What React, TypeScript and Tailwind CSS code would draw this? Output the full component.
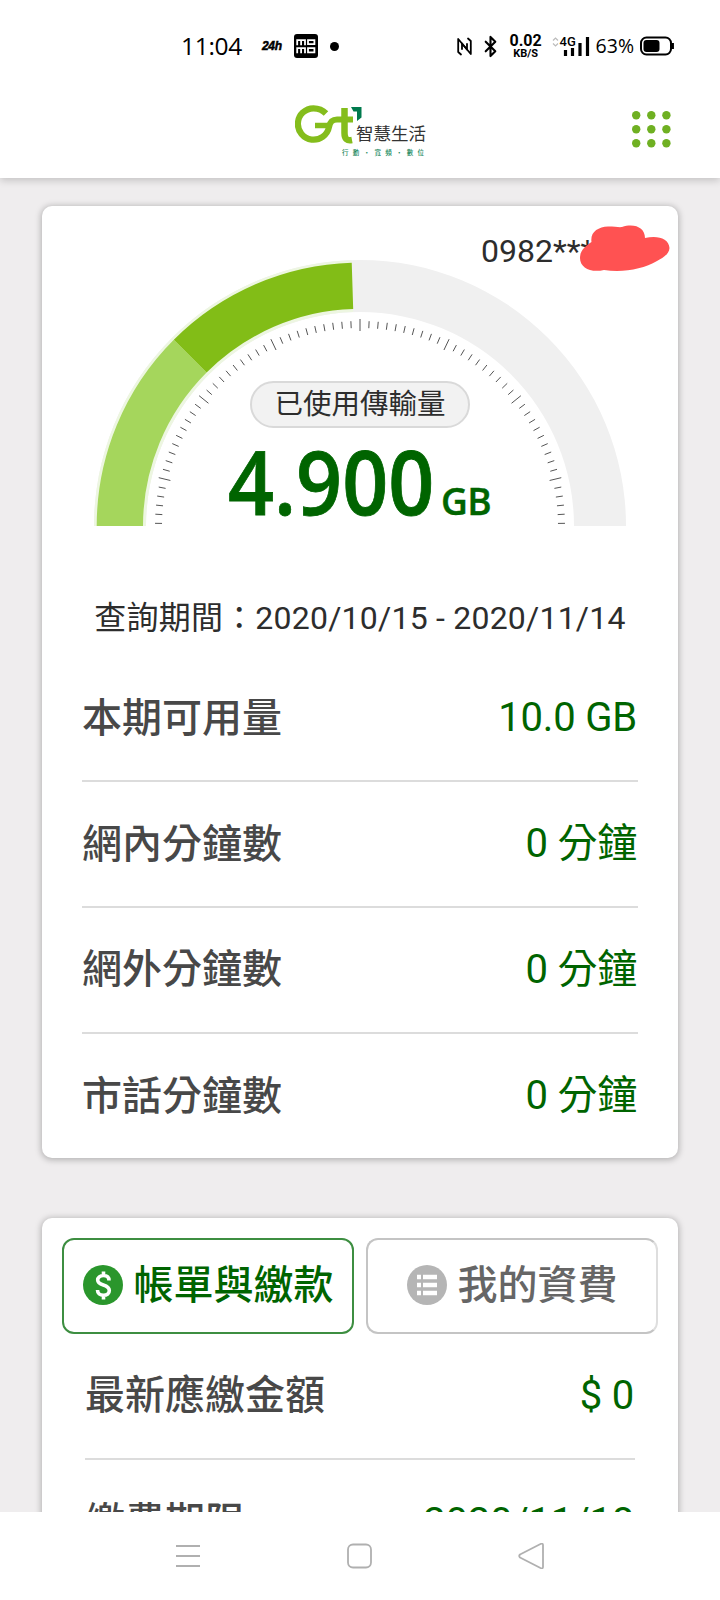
import React from 'react';
import { Bluetooth } from 'lucide-react';

interface UsageRow {
  label: string;
  value: string;
}

const usageRows: UsageRow[] = [
  { label: '本期可用量', value: '10.0 GB' },
  { label: '網內分鐘數', value: '0 分鐘' },
  { label: '網外分鐘數', value: '0 分鐘' },
  { label: '市話分鐘數', value: '0 分鐘' },
];

// Point on the gauge, angle in degrees measured clockwise from the left end
const point = (radius: number, angle: number) => {
  const rad = (angle * Math.PI) / 180;
  return `${(266 - radius * Math.cos(rad)).toFixed(2)} ${(266 - radius * Math.sin(rad)).toFixed(2)}`;
};

const band = (outer: number, inner: number, from: number, to: number) =>
  `M${point(outer, from)}A${outer} ${outer} 0 0 1 ${point(outer, to)}L${point(inner, to)}A${inner} ${inner} 0 0 0 ${point(inner, from)}Z`;

const StatusBar = () => (
  <div className="flex h-[84px] items-center pl-[181px] pr-[46px] pt-2 text-black">
    <span className="w-[81px] font-['Open_Sans',sans-serif] text-[24.500px] leading-none tracking-[-0.3px]">11:04</span>
    <span className="w-[32px] font-['Liberation_Sans',sans-serif] text-[12px] font-bold italic leading-none tracking-[-0.3px] [-webkit-text-stroke:0.5px_black]">24h</span>
    <svg className="h-6 w-6" viewBox="0 0 24 24">
      <rect width="24" height="24" rx="3" fill="#000" />
      <g fill="none" stroke="#fff" strokeWidth="1.8">
        <path d="M3.2 11.300V6.200H11V11.300M7.100 6.200V11.300M14 6.200h6.400v4H14z" />
        <path d="M3.200 19.300V14.200H11V19.300M7.100 14.200V19.300M14 14.200h6.400v4.200H14z" />
      </g>
    </svg>
    <span className="ml-3 h-[9px] w-[9px] rounded-full bg-black" />
    <div className="ml-auto flex items-center">
      <svg className="h-[19px] w-[15px]" viewBox="0 0 15 19" fill="none" stroke="#000" strokeWidth="1.800" strokeLinecap="round" strokeLinejoin="round">
        <path d="M4 17.500L1.200 15V2L10 12.500V7" />
        <path d="M11 1.500L13.800 4V17L5 6.500V12" />
      </svg>
      <Bluetooth className="ml-[7px] h-[23px] w-[23px]" strokeWidth={2.2} />
      <div className="ml-[6px] flex w-[36px] flex-col items-center font-['Roboto',sans-serif] font-bold leading-none">
        <span className="text-[16px] leading-[15px]">0.02</span>
        <span className="text-[11px] leading-[11px]">KB/S</span>
      </div>
      <svg className="ml-2 h-[22px] w-[38px]" viewBox="0 0 38 22">
        <path d="M1 5.500L3.500 3 6 5.500M1 8.500l2.500 2.500L6 8.500" fill="none" stroke="#bbb" strokeWidth="1.200" />
        <text x="7.500" y="10.500" className="font-['Roboto',sans-serif] text-[13px] font-medium">4G</text>
        <path d="M13.500 21v-6M20.500 21v-8M28 21V8M35.500 21V2" stroke="#000" strokeWidth="3.200" />
      </svg>
      <span className="ml-[6px] font-['Open_Sans',sans-serif] text-[19.500px] leading-none">63%</span>
      <svg className="ml-[6px] h-5 w-[34px]" viewBox="0 0 34 20">
        <rect x="1" y="1.500" width="30" height="17" rx="5.500" fill="none" stroke="#000" strokeWidth="2" />
        <rect x="3.500" y="4" width="16" height="12" rx="3" fill="#000" />
        <path d="M32.700 7v6" stroke="#000" strokeWidth="2.500" />
      </svg>
    </div>
  </div>
);

const Logo = () => (
  <div className="relative h-[54px] w-[132px]">
    <svg className="absolute left-0 top-0 h-[46px] w-[70px]" viewBox="0 0 70 46">
      <path d="M31 9.500C27.500 5.800 23 4.300 18.500 4.300A15.700 15.700 0 1 0 34 23C35 18 37 15.500 42 15.500H58" fill="none" stroke="#84bd1c" strokeWidth="6.200" />
      <path d="M20 21.500H34" stroke="#84bd1c" strokeWidth="5.500" />
      <path d="M49.500 4V29C49.500 35 52 37 57 36" fill="none" stroke="#84bd1c" strokeWidth="6.500" />
      <path d="M56 3H66.500V13.500L62 17V7.500H58.500Z" fill="#007a4d" />
    </svg>
    <span className="absolute left-[61px] top-[19px] whitespace-nowrap font-['Noto_Sans_CJK_TC',sans-serif] text-[17.500px] leading-[20px] text-[#333]">智慧生活</span>
    <span className="absolute left-[47px] top-[44px] whitespace-nowrap font-['Noto_Sans_CJK_TC',sans-serif] text-[6.500px] font-medium leading-[8px] tracking-[4.300px] text-[#1d8a62]">行動・寬頻・數位</span>
  </div>
);

const Header = () => (
  <header className="relative z-10 h-[178px] bg-white shadow-[0_2px_8px_rgba(0,0,0,0.2)]">
    <StatusBar />
    <div className="flex items-start justify-between pl-[295px] pr-[49px] pt-5">
      <Logo />
      <svg className="mt-[7px] h-[37px] w-[39px]" viewBox="0 0 39 37" fill="#6fb022">
        {Array.from({ length: 9 }, (_, i) => (
          <circle key={i} cx={4.2 + (i % 3) * 15.1} cy={4.2 + Math.floor(i / 3) * 14} r="4.200" />
        ))}
      </svg>
    </div>
  </header>
);

const Gauge = () => (
  <div className="relative mx-auto h-[266px] w-[532px]">
    <svg className="h-[266px] w-[532px]" viewBox="0 0 532 266">
      <path d={band(266, 214, 0, 180)} fill="#f0f0f0" />
      <path d={band(266, 214, 0, 88.2)} fill="#edf6e1" />
      <path d={band(263.3, 217, 0, 45)} fill="#a5d65c" />
      <path d={band(263.3, 217, 45, 88.2)} fill="#82bd17" />
      {Array.from({ length: 71 }, (_, i) => {
        const major = (i - 35) % 10 === 0;
        const angle = 90 + (i - 35) * 2.55;
        return (
          <path key={i} d={`M${point(major ? 207 : 205, angle)}L${point(major ? 195 : 198, angle)}`} stroke="#555" strokeWidth="1" />
        );
      })}
    </svg>
    <div className="absolute inset-x-0 top-[121px] flex flex-col items-center">
      <span className="flex h-[47px] w-[220px] items-center justify-center rounded-full border-2 border-[#d9d9d9] bg-[#f2f2f2] pb-[4px] font-['Noto_Sans_CJK_TC',sans-serif] text-[28.500px] font-normal leading-none text-[#2d2d2d]">
        已使用傳輸量
      </span>
      <div className="mt-[9px] flex w-[264px] items-baseline font-['Open_Sans',sans-serif] font-semibold leading-[88px] text-[#006400]">
        <span className="w-[213px] origin-left scale-x-[0.915] text-[88px] [-webkit-text-stroke:0.8px_#006400]">4.900</span>
        <span className="text-[37px] tracking-[-0.5px] [-webkit-text-stroke:0.4px_#006400]">GB</span>
      </div>
    </div>
  </div>
);

const Row = ({ label, value }: UsageRow) => (
  <div className="flex h-[125.700px] items-center justify-between border-b-2 border-[#dcdcdc] last:border-b-0">
    <span className="pb-[7px] font-['Noto_Sans_CJK_TC',sans-serif] text-[40px] font-medium leading-none text-[#484848]">{label}</span>
    <span className="pr-px font-['Roboto','Noto_Sans_CJK_TC',sans-serif] text-[40px] leading-none tracking-[-0.2px] text-[#006400]">{value}</span>
  </div>
);

const UsageCard = () => (
  <section className="mx-[42px] mt-[28px] h-[952px] rounded-[10px] bg-white shadow-[0_1px_6px_1px_rgba(0,0,0,0.25)]">
    <div className="relative flex h-[54px] items-end pl-[439px] font-['Roboto',sans-serif] text-[32px] leading-none text-[#2d2d2d]">
      <span className="translate-y-[7px]">0982***</span>
      <svg className="absolute left-[537px] top-[18px] h-[50px] w-[92px]" viewBox="0 0 92 50">
        <path d="M12.500 18C11 8 19 3 29 2.500C36 2.500 40 3.500 43 3C56-1 66 4 66 14C78 11 90 14 90.500 24C90 31 83 34 78 37C64 45 44 49 25 46C12 49 1 44 1 34C1 26 7 22 12.500 18Z" fill="#ff5252" />
      </svg>
    </div>
    <Gauge />
    <p className="mt-[72px] whitespace-nowrap text-center font-['Roboto','Noto_Sans_CJK_TC',sans-serif] text-[32px] leading-[40px] tracking-[0.220px] text-[#2d2d2d]">
      查詢期間：2020/10/15 - 2020/11/14
    </p>
    <div className="mx-10 mt-[18.500px]">
      {usageRows.map((row) => (
        <Row key={row.label} {...row} />
      ))}
    </div>
  </section>
);

const BillingCard = () => (
  <section className="mx-[42px] mt-[60px] h-[400px] rounded-[10px] bg-white px-5 pt-5 shadow-[0_1px_6px_1px_rgba(0,0,0,0.25)]">
    <div className="flex gap-3 font-['Noto_Sans_CJK_TC',sans-serif] text-[40px] font-medium leading-none">
      <button className="flex h-24 flex-1 items-center justify-center gap-[11px] whitespace-nowrap rounded-xl border-2 border-[#3d8e41] pb-[3px] text-[#006400]">
        <svg className="h-10 w-10 shrink-0" viewBox="0 0 40 40">
          <circle cx="20" cy="20" r="20" fill="#2a962c" />
          <path d="M26 15.500C26 12 23.500 10.500 20.500 10.500C17 10.500 14.700 12.500 14.700 15C14.700 21.500 26.300 18.500 26.300 25.500C26.300 28.500 24 30.300 20.500 30.300C17 30.300 14.500 28.500 14.500 25M20.500 6.500v4M20.500 30.500v4" fill="none" stroke="#fff" strokeWidth="3.600" />
        </svg>
        <span className="pb-[5px]">帳單與繳款</span>
      </button>
      <button className="flex h-24 flex-1 items-center justify-center gap-[11px] whitespace-nowrap rounded-xl border-2 border-[#c4c4c4] border-r-[#dedede] pb-[3px] text-[#666]">
        <svg className="h-10 w-10 shrink-0" viewBox="0 0 40 40">
          <circle cx="20" cy="20" r="20" fill="#b5b5b5" />
          <path d="M10 12h4M10 20h4M10 28h4M16 12h14M16 20h14M16 28h14" stroke="#fff" strokeWidth="4.300" />
        </svg>
        <span className="pb-[5px]">我的資費</span>
      </button>
    </div>
    <div className="mx-[23px]">
      <Row label="最新應繳金額" value="$ 0" />
      <Row label="繳費期限" value="2020/11/18" />
    </div>
  </section>
);

const NavBar = () => (
  <nav className="flex h-[88px] items-center justify-between bg-white pl-[176px] pr-[176px]">
    <svg className="h-[26px] w-6" viewBox="0 0 24 26" fill="none" stroke="#b0b0b0" strokeWidth="1.800">
      <path d="M0 3h24M0 13h24M0 23h24" />
    </svg>
    <svg className="h-[26px] w-[26px]" viewBox="0 0 26 26" fill="none" stroke="#b0b0b0" strokeWidth="1.800">
      <rect x="2" y="1.500" width="23" height="23" rx="5" />
    </svg>
    <svg className="h-[26px] w-[26px]" viewBox="0 0 26 26" fill="none" stroke="#b0b0b0" strokeWidth="1.800" strokeLinejoin="round">
      <path d="M22.500 1L2 11.500Q0.500 13 2 14.500L22.500 25Q25 26 25 24V2Q25 0 22.500 1Z" />
    </svg>
  </nav>
);

export default function App() {
  return (
    <div className="h-[1600px] w-[720px] overflow-hidden bg-[#efedee]">
      <div className="h-[1512px] overflow-hidden">
        <Header />
        <UsageCard />
        <BillingCard />
      </div>
      <NavBar />
    </div>
  );
}
